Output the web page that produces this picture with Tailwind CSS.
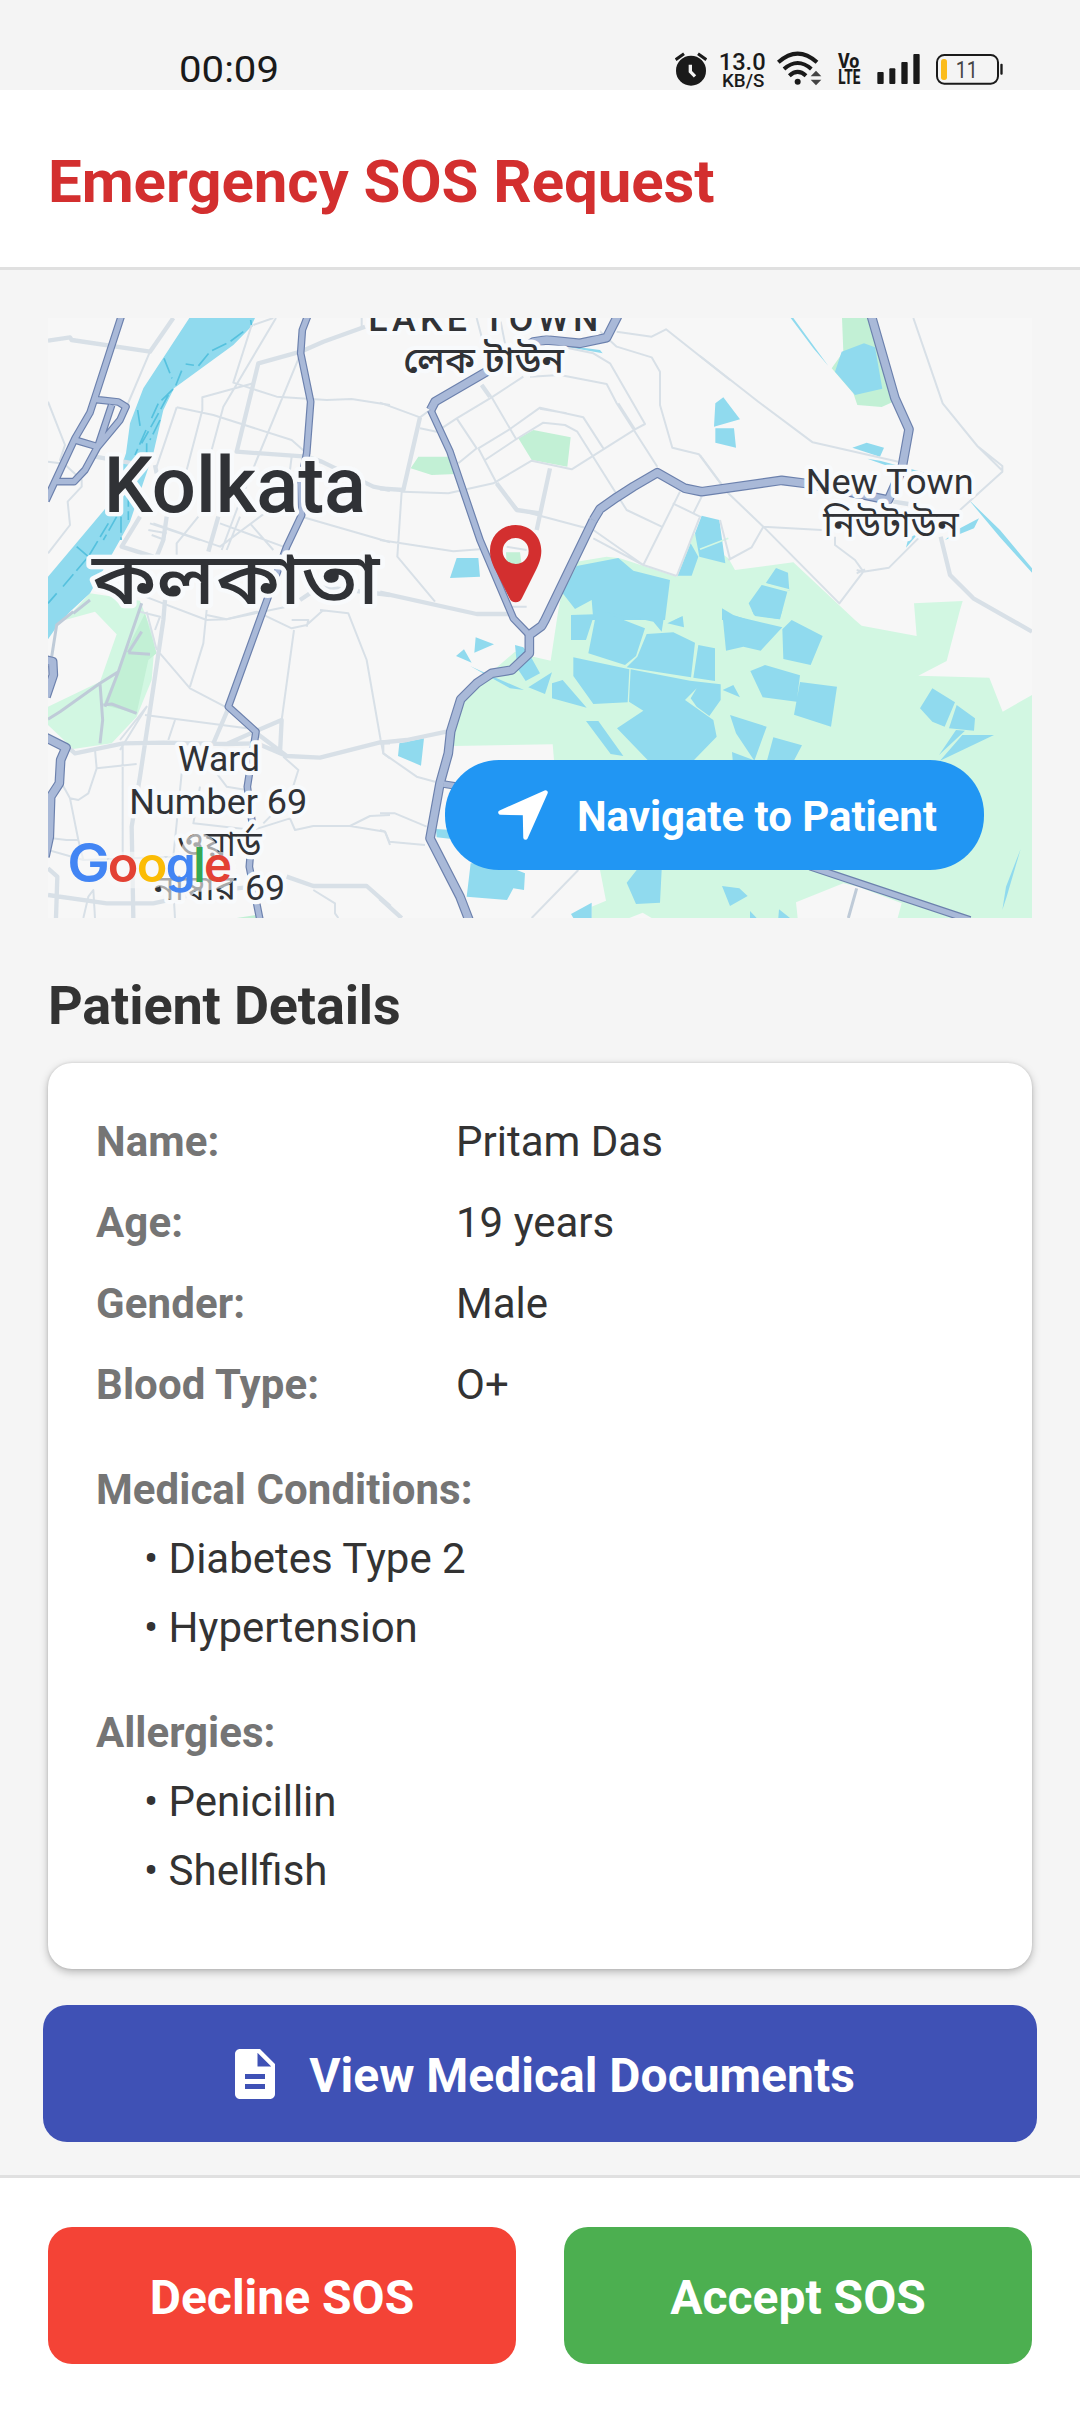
<!DOCTYPE html>
<html lang="en">
<head>
<meta charset="utf-8">
<title>Emergency SOS Request</title>
<script src="https://cdn.jsdelivr.net/npm/@tailwindcss/browser@4"></script>
</head>
<body class="bg-[#f4f4f4]">
<div class="w-[1080px] h-[2412px] flex flex-col overflow-hidden bg-[#f5f5f5] font-['Roboto','Noto_Sans',sans-serif] text-[#333333]">

  <!-- Status bar -->
  <div class="h-[90px] shrink-0 flex items-end justify-between pl-[180px] pr-[76px] bg-[#f4f4f4] text-[#1a1a1a]">
    <svg class="w-[102px] h-10 overflow-visible" viewBox="0 0 102 40"><text x="-1" y="32" font-family="Roboto, sans-serif" font-size="37" textLength="100" lengthAdjust="spacingAndGlyphs" fill="#1a1a1a">00:09</text></svg>
    <div class="flex h-10">
      <svg class="w-8 h-10" viewBox="45 30 96 120"><circle cx="93" cy="92" r="45" fill="#1a1a1a"/><path d="M47 59L72 41M139 59L114 41" stroke="#1a1a1a" stroke-width="9"/><path d="M91 74V95L105 109" fill="none" stroke="#f4f4f4" stroke-width="10"/></svg>
      <svg class="w-12 h-10 ml-[11px] overflow-visible" viewBox="174 30 144 120" font-family="Roboto, sans-serif" fill="#1a1a1a" font-weight="500"><text x="176" y="91" font-size="73" textLength="141" lengthAdjust="spacingAndGlyphs">13.0</text><text x="186" y="140" font-size="54" textLength="127" lengthAdjust="spacingAndGlyphs">KB/S</text></svg>
      <svg class="w-12 h-10 ml-[9px]" viewBox="345 30 144 120" fill="none" stroke="#1a1a1a" stroke-width="12"><path d="M355 67Q413 15 471 67M372 87Q413 51 454 87M388 107Q413 84 438 107"/><circle cx="413" cy="125" r="9" fill="#1a1a1a" stroke="none"/><path d="M452 109L468 92L484 109ZM452 119L468 136L484 119Z" fill="#444" stroke="none"/></svg>
      <svg class="w-6 h-10 ml-[14px] overflow-visible" viewBox="531 30 72 120" font-family="Roboto, sans-serif" fill="#1a1a1a" font-weight="800"><text x="534" y="83" font-size="58" textLength="64" lengthAdjust="spacingAndGlyphs">Vo</text><text x="535" y="131" font-size="60" textLength="66" lengthAdjust="spacingAndGlyphs">LTE</text></svg>
      <svg class="w-[45px] h-10 ml-[15px]" viewBox="648 30 135 120" fill="#1a1a1a"><rect x="652" y="96" width="19" height="36" rx="3"/><rect x="688" y="85" width="18" height="47" rx="3"/><rect x="724" y="66" width="19" height="66" rx="3"/><rect x="760" y="42" width="19" height="90" rx="3"/></svg>
      <svg class="w-[69px] h-10 ml-[14px] overflow-visible" viewBox="825 30 207 120"><rect x="831" y="45" width="183" height="86" rx="22" fill="none" stroke="#1a1a1a" stroke-width="6"/><rect x="1021" y="71" width="7" height="33" rx="3" fill="#1a1a1a"/><rect x="843" y="57" width="18" height="63" rx="8" fill="#fbbc1c"/><text x="887" y="114" font-family="Roboto, sans-serif" font-size="73" textLength="66" lengthAdjust="spacingAndGlyphs" fill="#444">11</text></svg>
    </div>
  </div>

  <!-- Header -->
  <header class="h-[180px] shrink-0 bg-white border-b-[3px] border-[#e0e0e0] px-12 pt-12">
    <h1 class="text-[60px] leading-[87px] tracking-[-0.08px] font-bold text-[#d32f2f] whitespace-nowrap">Emergency SOS Request</h1>
  </header>

  <main class="flex-1 flex flex-col px-12 pt-12">
    <!-- Map -->
    <div class="relative h-[600px] shrink-0 overflow-hidden">
      <svg class="w-[984px] h-[600px] block" viewBox="24 24 2952 1800" fill="none" stroke-linejoin="round">
        <defs>
          <g id="narrow">
            <path d="M244 18L163 268L150 308L105 385L18 572M163 268L235 276L258 290L240 330L172 412L135 480L102 515H45M215 285L175 405M105 390L172 410"/>
            <path d="M803 18L787 60L782 130L812 275L800 430L782 520L785 615L740 710L670 900L565 1190L648 1265L622 1430L638 1550L628 1670L660 1830"/>
            <path d="M1172 300L1230 425L1320 690L1420 925L1468 975M1210 1422L1290 1435M2310 1670L2790 1830"/>
          </g>
          <g id="wide">
            <path d="M1733 18L1700 83L1620 100L1520 90L1480 96L1340 185L1185 275L1172 300"/>
            <path d="M1660 630L1680 597L1730 562L1780 530L1852 488L1935 535L1985 545L2225 511L2310 522L2545 570L2585 480L2607 358L2565 265L2494 18"/>
            <path d="M1660 630L1515 930L1505 948L1468 975V1030L1415 1080L1355 1090L1310 1120L1262 1168L1232 1265L1225 1330L1200 1420L1170 1585L1260 1760L1287 1830"/>
            <path d="M18 1050L38 1055L40 1095L18 1160M18 1283L78 1313L62 1350L58 1420L32 1460L28 1580L15 1640"/>
          </g>
        </defs>
        <rect x="24" y="24" width="2952" height="1800" fill="#f7f7f7"/>

        <!-- Parks -->
        <g fill="#d2f7e2">
          <path d="M1610 755L1700 740 1740 745 1910 800 1960 670 2065 745 2085 780 2260 757 2445 930 2465 947 2630 978 2622 880 2768 873 2760 900 2720 1053 2635 1097 2848 1103 2888 1205 2976 1155V1824H2573L2585 1780 2455 1730 2410 1720 2268 1777 2273 1824H1655V1790L1698 1772 1680 1680 1550 1500 1542 1350 1538 1303 1242 1308 1220 1300 1262 1170 1350 1090 1425 1025 1480 1040 1532 1052 1555 900 1565 850Z"/>
          <path d="M75 930L150 850 300 872 345 990 335 1110 290 1220 215 1300 100 1317 24 1245V1190L180 1115 230 973 165 905Z"/>
        </g>
        <g fill="#c2f0d5">
          <path d="M315 910L350 1030 325 1050 290 1210 190 1185 250 1040Z"/>
          <path d="M1435 385L1480 360 1592 382 1582 470 1475 450ZM1112 475L1135 440H1225L1248 492 1175 495ZM1398 727H1440L1445 765H1400ZM2406 24H2490L2560 275 2525 291 2452 285 2440 250 2375 175 2410 125ZM590 1824L665 1812V1824Z"/>
        </g>
        <path d="M1768 1824L1808 1808 1835 1824Z" fill="#f7f7f7"/>

        <!-- Water -->
        <g fill="#90daee">
          <path d="M448 24H645L632 52 580 105 402 235 370 300 340 430 270 635 240 690 150 850 90 905 50 950 24 988V800L205 585 258 430 270 340 310 235Z"/>
          <g transform="translate(1020)">
            <path d="M530 105L570 108 660 120 668 130 600 118ZM230 744H295L300 800 210 804ZM590 768L715 744 760 782 870 810 855 930H640L635 870 585 897 548 850ZM945 670L965 617 1018 630 1036 760 958 740ZM932 700L955 740 935 797H893ZM573 930L580 915H640L645 930ZM885 930L905 920V930Z"/>
          </g>
          <g transform="translate(1980)">
            <path d="M46 280L70 262 120 328 42 350ZM46 355H102L108 413 46 398ZM425 125L492 100 525 112 547 236 465 255 405 185ZM457 413L500 398 552 413 540 440ZM502 446L540 452 720 500 700 502 570 470ZM272 24H280L385 168L340 115ZM805 568L900 660 996 775V788L900 682ZM735 690L770 660 837 625 822 655ZM618 713L625 685 655 670ZM197 820L228 774 264 788 268 842ZM185 825L262 845 240 928 162 915 146 880ZM66 895L100 915 145 930H66Z"/>
          </g>
          <g transform="translate(1020 900)">
            <path d="M640 0H855L845 65 820 35 750 20ZM573 15L643 13 618 90H573ZM647 18L700 18 795 55 768 138 735 165 625 130ZM800 72L880 67 945 98 933 202 740 172 772 140ZM955 105L1005 115V213L940 203ZM862 40L908 18 912 52ZM580 142L748 178 743 277 640 282 580 198ZM752 178L930 212 1022 223V270L988 318 950 290 932 265 950 235 915 270 1000 330 1010 380 940 452H805L711 355 790 302 747 275ZM618 333H655L730 438 692 432ZM516 220L548 210 620 293 516 265ZM405 105L430 112 455 145 480 190 437 213 412 175ZM445 232L516 187 495 252ZM287 82L342 103 283 128ZM228 138L252 118 275 158ZM270 168L340 200 432 240 390 235ZM58 400L132 385 123 467 54 438ZM168 657L215 660V687L170 682ZM272 760H360L435 790 432 840 400 835 381 870 260 860ZM770 780H845L840 878 768 882 740 818ZM573 912L635 878V924H580ZM1028 240L1060 225 1080 262Z"/>
          </g>
          <g transform="translate(1980 900)">
            <path d="M155 0H247L238 28 165 18ZM66 0L92 15 247 52 182 122 130 110 78 122ZM247 58L275 30 368 78 332 165 250 147ZM151 183L195 165 300 196 290 275 188 262ZM300 216L411 230 393 350 282 314ZM90 315L200 350 163 452 108 370ZM220 382L306 406 280 455H200ZM96 426L160 450H98ZM660 295L697 235 765 277 734 350 697 335ZM770 285L825 325 822 362 747 355ZM768 360L795 362 717 435ZM787 375H882L720 452ZM962 717L920 860 907 900 918 830ZM66 828L118 835 143 858 90 888ZM150 903L170 924H150ZM237 898L270 924H235Z"/>
          </g>
        </g>
        <path d="M2065 685L1980 718M2170 820L2248 840" stroke="#d2f7e2" stroke-width="5"/>
        <path d="M632 30L635 50M610 65L570 95L510 125L475 168L437 162M425 182L405 232L355 280L330 335M372 145L396 205M293 300L302 360M385 255L350 320L305 400M360 330L330 390M318 360L285 435M320 400V440M265 480V630M243 620V690M230 620L190 690M205 640L145 740L60 840M110 710L145 740M50 850L24 880" stroke="#55c1de" stroke-width="5" stroke-dasharray="48 14"/>

        <!-- Local roads -->
        <g stroke="#d8e0e7" stroke-width="6">
          <path d="M330 125L262 285M24 275L75 405L60 450L125 510V530L83 575L90 645L24 730M24 455L60 460M708 24L550 290L515 420M640 45L700 24M635 45L580 218L710 260L860 270L935 267L1050 285M782 130L650 450L590 600L545 720M640 220L487 262V300L440 480M410 292L520 315L755 390L800 430M410 292L350 470M965 24V50M785 620L1050 697M340 640L540 710L740 560M330 640L480 690M325 660L380 670M335 675L375 690M540 640L730 710M600 620L560 720M630 640L700 720M475 620L410 700V740M755 440L740 560M290 850L500 930L560 928L740 890"/>
          <path d="M500 900L490 1000L450 1130M360 1030L450 1135L565 1195M500 915L560 928L650 905L755 955L800 945L850 900M755 930H805L800 950M762 960L725 1230M840 900L925 910L980 1050L1022 1290L1030 1330L1050 1345M240 1290L320 1190L240 1320M315 1215L620 1255M405 1230L385 1290M248 1300V1640M165 1320L170 1375L145 1450L115 1470L90 1465L65 1420M170 1375L290 1362M90 1465L115 1590L80 1590L35 1585M115 1590L130 1650L24 1620M425 1390L400 1640V1740L405 1824M130 1650L400 1640M480 1430L460 1540L640 1560L750 1525M530 1390L560 1430L620 1440M750 1525L765 1560L820 1548H930L990 1518L1050 1515M930 1548L1035 1565L1050 1605M670 1540L750 1460L775 1380L730 1340M130 1824L145 1760L160 1740L165 1824M820 1740L885 1780V1810L895 1824M320 905L350 1020M300 905L360 920L345 960"/>
          <g transform="translate(1020)">
            <path d="M0 278L120 322L150 300M120 355L170 365L230 325L335 262L430 200M290 24L310 100M362 35L375 100M230 325L290 415L235 460M305 225L335 262L410 390M295 415L390 357L480 293L610 322L670 415M315 450L405 390L490 338L555 345L592 365L740 600L845 650M480 296L560 310M450 200L540 195L680 222L710 280L832 470M715 280L765 358L795 342L690 160L640 130L545 110M765 358L575 478L455 452L340 520L205 550L68 545M295 415L350 520L415 600L640 660L790 765L890 798M640 660L605 650M65 545L52 740L165 875M0 690L220 724L300 718M640 685L790 765L900 545M878 580L940 610L965 560M940 610L960 620L890 798M710 65L815 80L858 58L1050 210M650 55L710 110L815 142L840 185V285L877 413L957 433L1025 525M380 710L440 720"/>
            <path d="M0 1510H45L140 1550M0 1560L15 1565L28 1595L135 1605M10 1300V1330L110 1400L165 1415M595 1680L455 1824M440 890L395 890"/>
          </g>
          <g transform="translate(1980)">
            <path d="M0 138L175 275L338 397L595 455M640 24L728 280L832 408L907 468V485L780 600M832 408L905 480M0 435L85 550L190 650L418 880L490 785L567 773L660 680M190 650L365 660M405 680V705L465 750L490 785L470 780M85 750L155 712L190 650M60 630L90 748M470 790L495 778"/>
          </g>
        </g>
        <g stroke="#d8e0e7" stroke-width="13">
          <path d="M24 92L90 82L95 90L330 125L400 24M975 50L850 95L782 125L655 160L590 425L800 440L845 455L1000 530L1050 540M165 440L280 460M345 465L350 490M300 620L245 710L340 740M380 620L370 690L350 740M535 620L505 725M780 870L840 830L1050 855M375 870L370 930L345 1100L300 1400L275 1550L280 1824M90 1317L105 1330L250 1300L370 1298L560 1302L650 1300L740 1338L840 1343L1020 1297H1050M565 1195L520 1300M560 1302L650 1262L725 1230L720 1330M650 1270L740 1338M24 1675L52 1700L48 1824M24 1755L200 1780H340L500 1745L640 1730M740 1700L820 1728H980L1050 1790"/>
          <path d="M1140 322L1090 540L1020 535M1020 848L1310 912H1410M1020 1298L1100 1290L1220 1265M1020 1765L1085 1824M1530 475L1490 660M1325 225L1350 260M1370 520L1430 600L1500 610M2702 680L2730 795L2800 865L2976 965M2560 575L2605 582"/>
        </g>
        <g stroke="#bfcbd8" stroke-width="9">
          <path d="M305 880L235 1085L180 1120L60 1205L24 1228M235 1085L195 1190M180 1120L188 1230L180 1300M265 1028L305 965M265 1028L330 1033M190 1185L215 1182L290 1210M100 905L50 945L35 1040M150 870L100 910M2450 1735L2425 1824"/>
        </g>

        <!-- Highways -->
        <use href="#narrow" stroke="#6c81ad" stroke-width="23"/>
        <use href="#wide" stroke="#6c81ad" stroke-width="29"/>
        <use href="#narrow" stroke="#a9b9d8" stroke-width="16"/>
        <use href="#wide" stroke="#a9b9d8" stroke-width="22"/>

        <!-- Place labels -->
        <g fill="#303236" stroke="#f8fafc" stroke-width="26" paint-order="stroke" font-family="Roboto, 'Noto Sans Bengali', 'Noto Sans', sans-serif">
          <g font-weight="500">
            <text x="191" y="606" font-size="234" textLength="787" lengthAdjust="spacingAndGlyphs">Kolkata</text>
            <text x="156" y="882" font-size="214" textLength="862" lengthAdjust="spacingAndGlyphs">কলকাতা</text>
            <text x="985" y="64" font-size="107" textLength="690">LAKE TOWN</text>
            <text x="1090" y="190" font-size="112" textLength="482" lengthAdjust="spacingAndGlyphs">লেক টাউন</text>
          </g>
          <text x="2297" y="551" font-size="107" textLength="504" lengthAdjust="spacingAndGlyphs">New Town</text>
          <text x="2350" y="680" font-size="108" textLength="406" lengthAdjust="spacingAndGlyphs">নিউটাউন</text>
          <text x="414" y="1382" font-size="107" textLength="246" lengthAdjust="spacingAndGlyphs">Ward</text>
          <text x="268" y="1511" font-size="107" textLength="534" lengthAdjust="spacingAndGlyphs">Number 69</text>
          <text x="412" y="1638" font-size="106" textLength="253" lengthAdjust="spacingAndGlyphs">ওয়ার্ড</text>
          <text x="340" y="1769" font-size="106" textLength="395" lengthAdjust="spacingAndGlyphs">নাম্বার 69</text>
        </g>

        <!-- Map provider logo on a translucent halo -->
        <path d="M148 1660L148 1662M250 1680H335M420 1680L415 1720M478 1625V1690L535 1680" transform="translate(0 0)" stroke="#f8f8f8" stroke-opacity=".6" stroke-width="110" stroke-linecap="round"/>
        <g font-family="Inter, sans-serif" font-weight="600" font-size="156">
          <text x="82" y="1716" font-size="160" textLength="128" lengthAdjust="spacingAndGlyphs" fill="#4285f4">G</text>
          <text x="203" y="1716" font-size="146" textLength="92" lengthAdjust="spacingAndGlyphs" fill="#e34234">o</text>
          <text x="290" y="1716" font-size="146" textLength="92" lengthAdjust="spacingAndGlyphs" fill="#fbbc05">o</text>
          <text x="377" y="1716" font-size="146" textLength="90" lengthAdjust="spacingAndGlyphs" fill="#4285f4">g</text>
          <text x="460" y="1716" font-size="146" textLength="37" lengthAdjust="spacingAndGlyphs" fill="#34a853">l</text>
          <text x="492" y="1716" font-size="146" textLength="84" lengthAdjust="spacingAndGlyphs" fill="#e34234">e</text>
        </g>

        <!-- Patient marker -->
        <path fill-rule="evenodd" fill="#d32f2f" d="M1427 645C1384 645 1350 679 1350 722C1350 745 1358 763 1366 780L1408 864Q1414 877 1427 877Q1440 877 1446 864L1488 780C1496 763 1504 745 1504 722C1504 679 1470 645 1427 645ZM1427 684A39 39 0 1 1 1427 762A39 39 0 1 1 1427 684Z"/>
      </svg>
      <button class="absolute left-[397px] top-[442px] w-[539px] h-[110px] rounded-[54px] bg-[#2196f3] flex items-center pl-[53px] text-white">
        <svg class="w-[50px] h-[50px] shrink-0" viewBox="0 0 50 50"><path d="M47.5 2.5L2.500 22.500L27 23L27.500 47.500Z" fill="#fff" stroke="#fff" stroke-width="4.500" stroke-linejoin="round"/></svg>
        <span class="pl-[29px] pt-0.5 text-[42px] leading-[57px] tracking-[-0.05px] font-bold whitespace-nowrap">Navigate to Patient</span>
      </button>
    </div>

    <!-- Patient details -->
    <h2 class="mt-[48px] h-[97px] shrink-0 text-[54px] leading-[79px] tracking-[-0.15px] font-bold whitespace-nowrap">Patient Details</h2>
    <section class="h-[906px] shrink-0 rounded-[24px] bg-white px-12 pt-[49px] text-[42px] leading-[60px] shadow-[0_3px_8px_rgba(0,0,0,0.26),0_0_3px_rgba(0,0,0,0.12)]">
      <dl class="grid grid-cols-[360px_1fr] gap-y-[21px]">
        <dt class="font-bold tracking-[0.1px] text-[#757575]">Name:</dt><dd>Pritam Das</dd>
        <dt class="font-bold tracking-[0.1px] text-[#757575]">Age:</dt><dd>19 years</dd>
        <dt class="font-bold tracking-[0.1px] text-[#757575]">Gender:</dt><dd>Male</dd>
        <dt class="font-bold tracking-[0.1px] text-[#757575]">Blood Type:</dt><dd>O+</dd>
      </dl>
      <div class="mt-[45px] flex flex-col gap-[9px]">
        <h3 class="font-bold tracking-[0.05px] text-[#757575]">Medical Conditions:</h3>
        <p class="pl-12">• Diabetes Type 2</p>
        <p class="pl-12">• Hypertension</p>
      </div>
      <div class="mt-[45px] flex flex-col gap-[9px]">
        <h3 class="font-bold text-[#757575]">Allergies:</h3>
        <p class="pl-12">• Penicillin</p>
        <p class="pl-12">• Shellfish</p>
      </div>
    </section>

    <button class="mt-[36px] -mx-[5px] h-[137px] shrink-0 rounded-[24px] bg-[#3f51b5] flex items-center justify-center gap-6 text-white">
      <svg class="w-[60px] h-[60px]" viewBox="0 0 24 24" fill="#fff"><path d="M14 2H6c-1.100 0-1.990.9-1.990 2L4 20c0 1.100.89 2 1.990 2H18c1.100 0 2-.9 2-2V8l-6-6zm2 16H8v-2h8v2zm0-4H8v-2h8v2zm-3-5V3.500L18.500 9H13z"/></svg>
      <span class="pt-1 text-[48px] leading-[64px] font-bold whitespace-nowrap">View Medical Documents</span>
    </button>
  </main>

  <!-- Actions -->
  <footer class="h-[237px] shrink-0 bg-white border-t-[3px] border-[#e0e0e0] px-12 pt-[49px] flex gap-12">
    <button class="flex-1 h-[137px] pt-1 rounded-[24px] bg-[#f44336] text-white text-[48px] font-bold">Decline SOS</button>
    <button class="flex-1 h-[137px] pt-1 rounded-[24px] bg-[#4caf50] text-white text-[48px] font-bold">Accept SOS</button>
  </footer>
</div>
</body>
</html>
